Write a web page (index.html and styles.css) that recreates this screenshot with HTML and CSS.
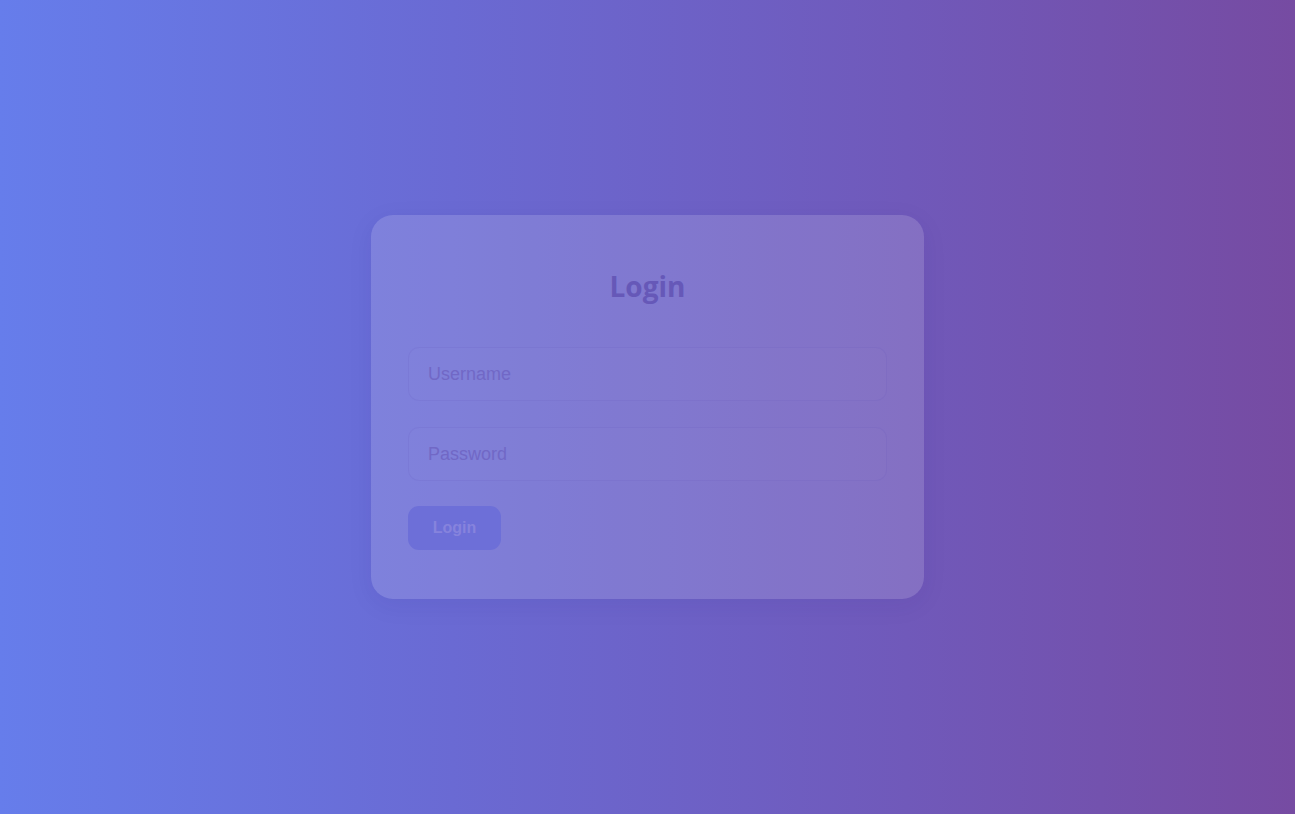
FILE: index.html
```html
<!DOCTYPE html>
<html lang="en">
<head>
<meta charset="utf-8">
<title>Login</title>
<link rel="stylesheet" href="styles.css">
</head>
<body>
<main class="page">
  <form class="card">
    <h1 class="title">Login</h1>
    <input class="field" type="text" placeholder="Username">
    <input class="field" type="password" placeholder="Password">
    <div class="actions">
      <button class="btn" type="button">Login</button>
    </div>
  </form>
</main>
</body>
</html>
```
FILE: styles.css
```css
* { box-sizing: border-box; }
html, body { margin: 0; height: 100%; }
body {
  font-family: "Liberation Sans", Arial, sans-serif;
  background: linear-gradient(to right, #667deb 0%, #6a6ad3 35%, #7059ba 70%, #764ba2 100%);
}
.page {
  height: 100%;
  display: flex;
  align-items: center;
  justify-content: center;
}
.card {
  width: 553px;
  height: 384px;
  padding: 52px 37px 49px;
  border-radius: 22px;
  background: rgba(255, 255, 255, 0.14);
  box-shadow: 0 6px 24px rgba(40, 30, 130, 0.08);
  display: flex;
  flex-direction: column;
}
.title {
  margin: 0 0 42px;
  text-align: center;
  font-family: "Open Sans", sans-serif;
  font-weight: 700;
  font-size: 28px;
  line-height: 38px;
  color: #6658b8;
}
.field {
  width: 100%;
  height: 54px;
  padding: 0 19px;
  margin: 0 0 26px;
  border: 1px solid rgba(90, 70, 180, 0.12);
  border-radius: 11px;
  background: rgba(255, 255, 255, 0.01);
  font-family: "Liberation Sans", Arial, sans-serif;
  font-size: 18px;
  color: #6658b8;
  outline: none;
}
.field + .field { margin-bottom: 25px; }
.field::placeholder { color: #7168c6; }
.actions { display: flex; }
.btn {
  height: 44px;
  width: 93px;
  padding: 0;
  border: none;
  border-radius: 11px;
  background: #6d6fd8;
  color: #8683dd;
  font-family: "Liberation Sans", Arial, sans-serif;
  font-weight: 700;
  font-size: 16px;
  cursor: pointer;
}
```
